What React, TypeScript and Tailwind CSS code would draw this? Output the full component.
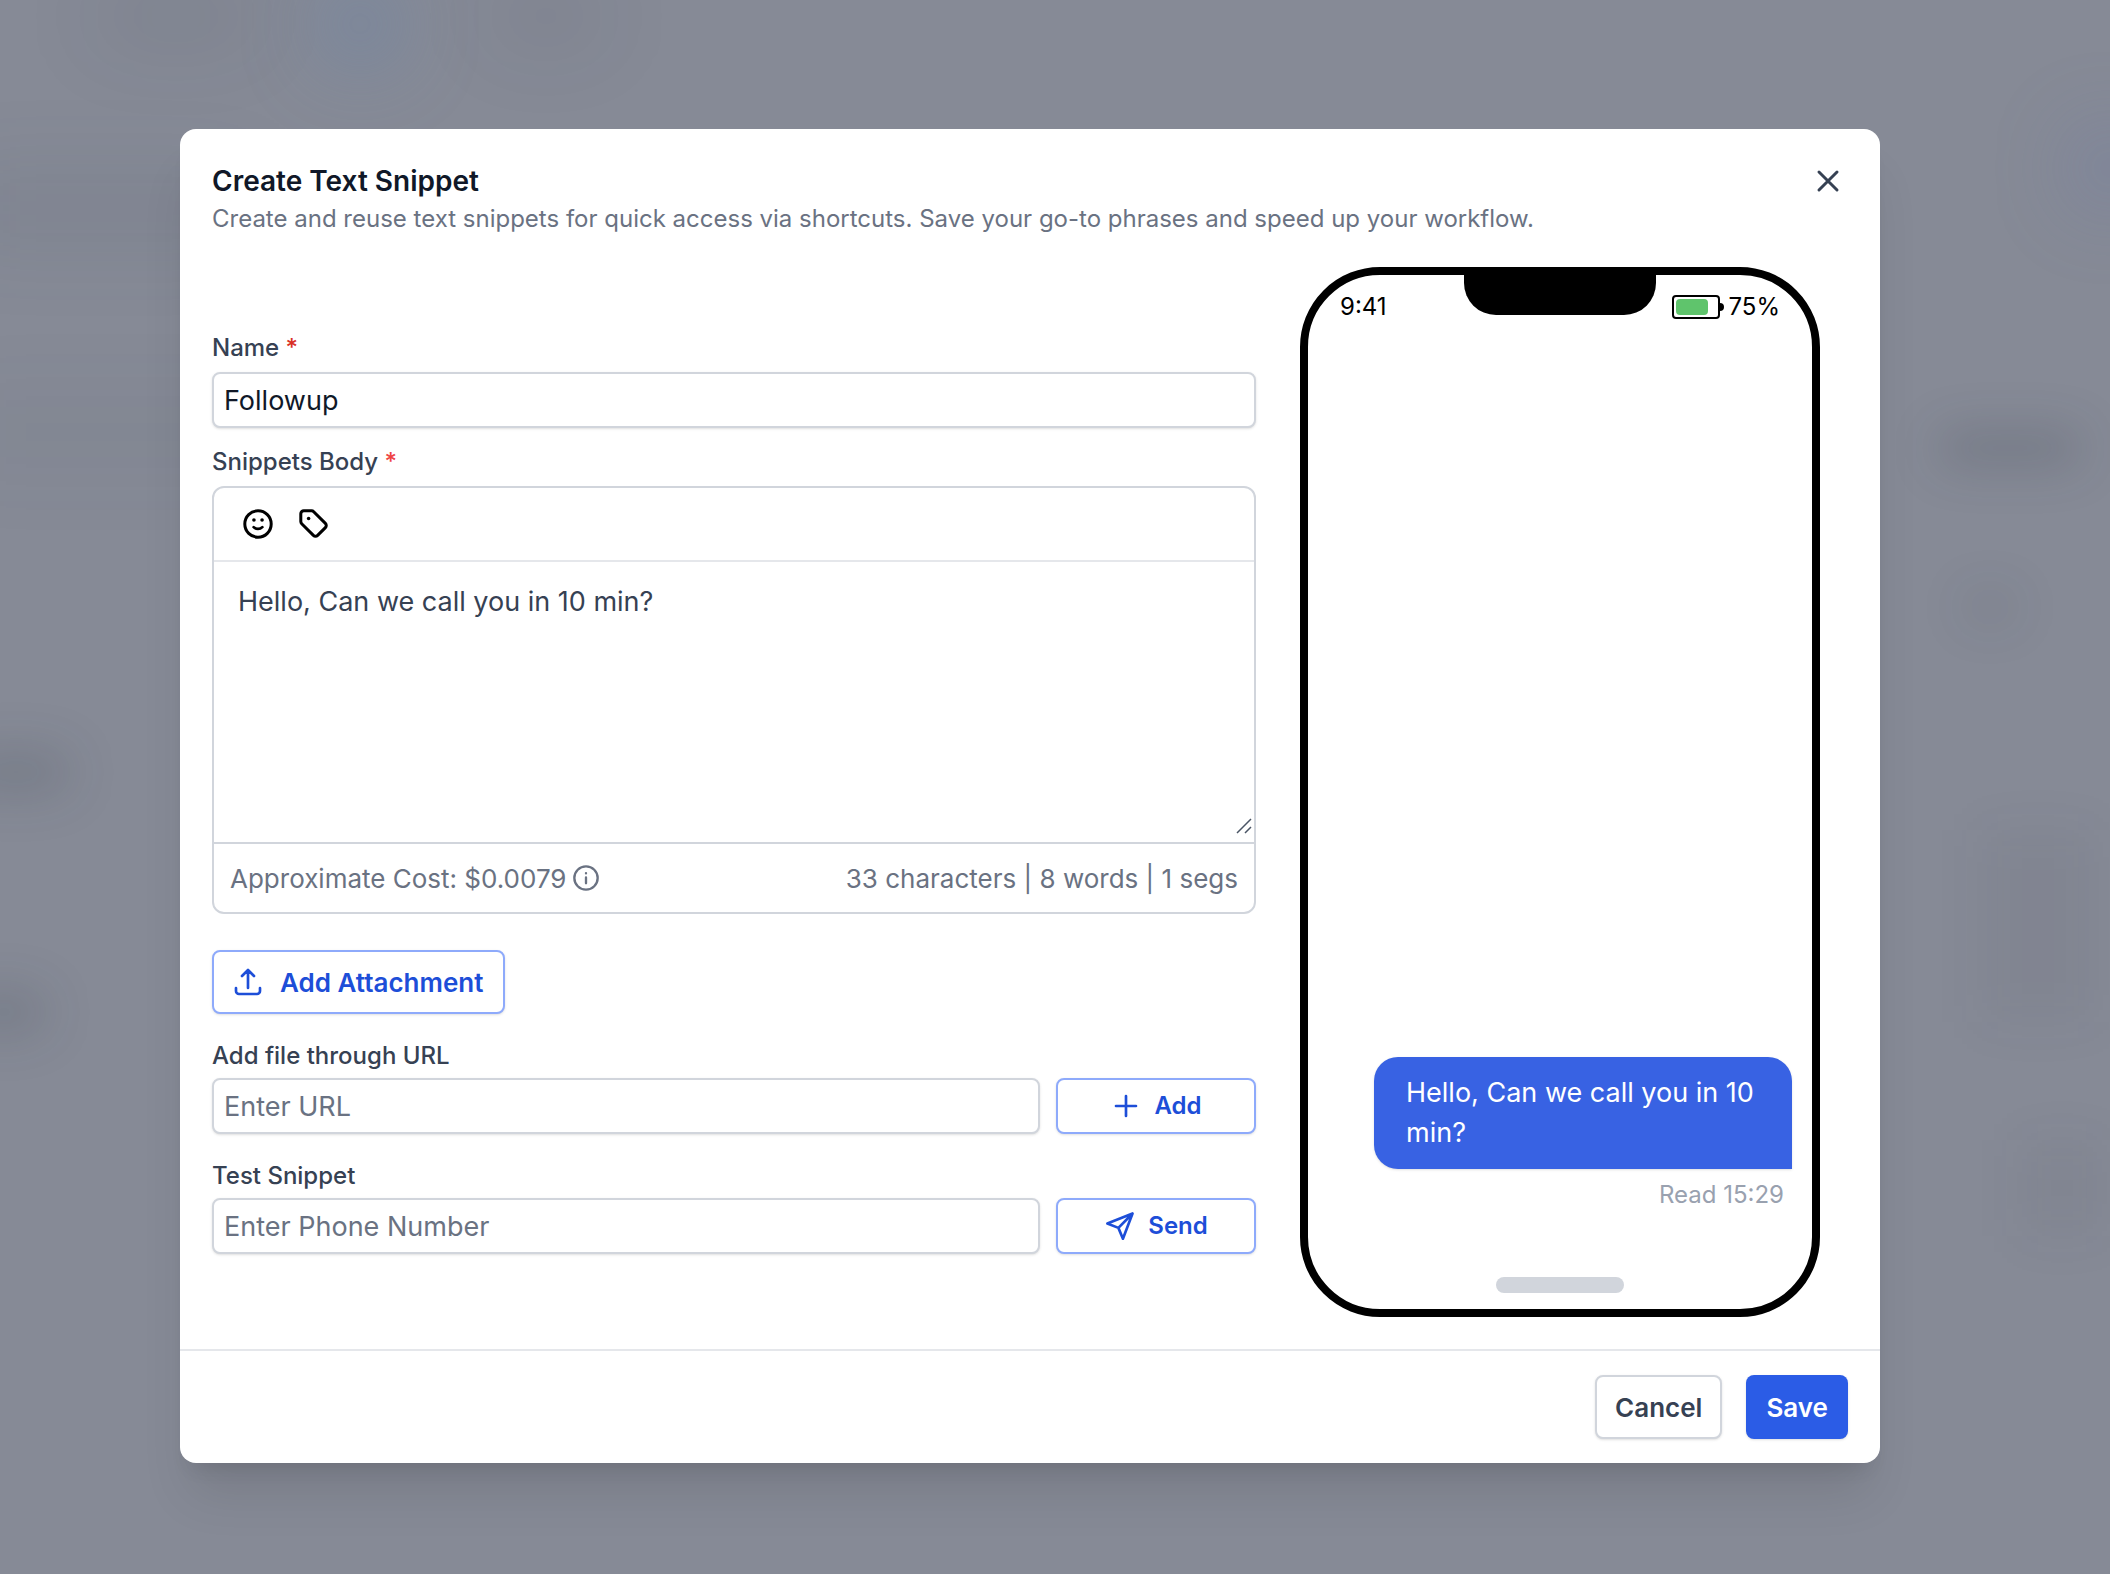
import { useState, type ReactNode } from "react";

function Icon({ className, children }: { className: string; children: ReactNode }) {
  return (
    <svg
      viewBox="0 0 24 24"
      fill="none"
      stroke="currentColor"
      strokeWidth="2"
      strokeLinecap="round"
      strokeLinejoin="round"
      aria-hidden="true"
      className={className}
    >
      {children}
    </svg>
  );
}

const fieldClass =
  "h-14 w-full min-w-0 rounded-lg border-2 border-gray-300 bg-white px-2.5 text-[27px] text-gray-900 shadow-sm outline-none placeholder:text-gray-500";
const labelClass = "text-2xl leading-9 font-medium text-gray-700";
const sideButtonClass =
  "flex h-14 w-[200px] shrink-0 items-center justify-center gap-3 rounded-lg border-2 border-[#8eaafb] bg-white text-2xl font-semibold text-[#1d4ed8] shadow-sm";

function Backdrop() {
  return (
    <div aria-hidden="true" className="absolute inset-0 overflow-hidden">
      <div className="absolute -top-2 left-24 h-12 w-40 rounded-full bg-gray-800/10 blur-2xl" />
      <div className="absolute -top-4 left-80 h-20 w-20 rounded-full bg-[#5b7fae]/40 blur-2xl" />
      <div className="absolute -top-2 left-[490px] h-12 w-28 rounded-full bg-gray-800/10 blur-2xl" />
      <div className="absolute top-44 -left-10 h-16 w-72 bg-slate-700/10 blur-2xl" />
      <div className="absolute top-[400px] -left-10 h-16 w-72 bg-slate-700/5 blur-2xl" />
      <div className="absolute top-[750px] -left-10 h-11 w-28 rounded-full bg-gray-800/15 blur-xl" />
      <div className="absolute top-[990px] -left-10 h-11 w-22 rounded-full bg-gray-800/15 blur-xl" />
      <div className="absolute top-32 -right-10 h-20 w-20 rounded-full bg-[#5b6fae]/25 blur-2xl" />
      <div className="absolute top-[432px] right-7 h-8 w-36 rounded-full bg-gray-800/20 blur-xl" />
      <div className="absolute top-[595px] right-24 h-6 w-12 rounded-full bg-gray-800/15 blur-xl" />
      <div className="absolute top-[830px] right-4 h-48 w-28 bg-gray-800/5 blur-xl" />
      <div className="absolute top-[1140px] right-2 h-24 w-20 bg-gray-800/5 blur-xl" />
    </div>
  );
}

function Phone({ message }: { message: string }) {
  return (
    <div className="relative flex h-[1050px] w-[520px] flex-col rounded-[80px] border-8 border-black bg-white">
      <div className="absolute top-0 left-1/2 h-10 w-48 -translate-x-1/2 rounded-b-[32px] bg-black" />
      <div className="flex items-center justify-between px-8 pt-4 text-2xl leading-8 text-black">
        <span>9:41</span>
        <div className="flex items-center gap-1">
          <div className="flex items-center">
            <div className="h-6 w-12 rounded-[4px] border-2 border-black p-0.5">
              <div className="h-4 w-8 rounded-[4px] bg-[#5fc46c]" />
            </div>
            <div className="h-2 w-1 rounded-r-full bg-black" />
          </div>
          <span>75%</span>
        </div>
      </div>
      <div className="flex flex-1 flex-col items-end justify-end pr-5 pb-16">
        <p className="w-[418px] rounded-3xl rounded-br-none bg-[#3862e3] px-8 py-4 text-[27px] leading-10 text-white shadow-sm">
          {message}
        </p>
        <p className="pt-2 pr-2 text-2xl leading-9 text-gray-400">Read 15:29</p>
      </div>
      <div className="mb-4 h-4 w-32 self-center rounded-full bg-gray-300" />
    </div>
  );
}

export default function App() {
  const [name, setName] = useState("Followup");
  const [body, setBody] = useState("Hello, Can we call you in 10 min?");
  const words = body.split(/\s+/).filter(Boolean).length;

  return (
    <div className="relative min-h-screen bg-[#868a96] pt-[129px] pr-[230px] pb-[111px] pl-[180px] font-['Inter',sans-serif]">
      <Backdrop />
      <div
        role="dialog"
        aria-labelledby="dialog-title"
        className="relative rounded-2xl bg-white shadow-[0_40px_50px_-10px_rgb(0_0_0/0.1),0_16px_20px_-12px_rgb(0_0_0/0.1)]"
      >
        <header className="flex items-start justify-between px-8 pt-8">
          <div>
            <h1 id="dialog-title" className="text-[28px] leading-10 font-semibold text-gray-900">
              Create Text Snippet
            </h1>
            <p className="text-2xl leading-9 text-gray-500">
              Create and reuse text snippets for quick access via shortcuts. Save your go-to phrases and speed up your
              workflow.
            </p>
          </div>
          <button type="button" aria-label="Close" className="p-0.5 text-gray-700">
            <Icon className="size-9">
              <path d="M6 18 18 6M6 6l12 12" />
            </Icon>
          </button>
        </header>

        <div className="flex gap-11 pt-[30px] pr-[60px] pb-8 pl-8">
          <form className="flex min-w-0 flex-1 flex-col pt-[63px]" onSubmit={(e) => e.preventDefault()}>
            <label htmlFor="name" className={labelClass}>
              Name <span className="text-[#d93025]">*</span>
            </label>
            <input
              id="name"
              className={`${fieldClass} mt-1.5`}
              value={name}
              onChange={(e) => setName(e.target.value)}
            />

            <label htmlFor="body" className={`${labelClass} mt-4`}>
              Snippets Body <span className="text-[#ef4444]">*</span>
            </label>
            <div className="mt-1.5 overflow-hidden rounded-xl border-2 border-gray-300">
              <div className="flex h-[74px] items-center gap-5 border-b-2 border-gray-200 px-[26px] text-black">
                <button type="button" aria-label="Insert emoji">
                  <Icon className="size-9">
                    <circle cx="12" cy="12" r="8.8" />
                    <path d="M9.1 14.1c.8.8 1.8 1.2 2.9 1.2s2.100-.4 2.900-1.200" strokeWidth="1.8" />
                    <g fill="currentColor" stroke="none">
                      <circle cx="9.3" cy="9.3" r="1.200" />
                      <circle cx="14.7" cy="9.3" r="1.200" />
                    </g>
                  </Icon>
                </button>
                <button type="button" aria-label="Insert tag">
                  <Icon className="size-9">
                    <path d="M3.200 5.200a2 2 0 0 1 2-2h5.200a2 2 0 0 1 1.400.6l7.800 7.800a2 2 0 0 1 0 2.800l-5.200 5.200a2 2 0 0 1-2.800 0l-7.800-7.800a2 2 0 0 1-.6-1.400z" />
                    <circle cx="8.400" cy="8.300" r="1.200" fill="currentColor" stroke="none" />
                  </Icon>
                </button>
              </div>
              <div className="relative">
                <textarea
                  id="body"
                  className="block h-[280px] w-full resize-none px-6 pt-5 text-[27px] leading-10 text-gray-700 outline-none"
                  value={body}
                  onChange={(e) => setBody(e.target.value)}
                />
                <svg
                  viewBox="0 0 16 16"
                  aria-hidden="true"
                  className="absolute right-0.5 bottom-2 size-4 text-gray-600"
                  stroke="currentColor"
                  strokeWidth="1.5"
                >
                  <path d="M1 15 15 1M9 15l6-6" />
                </svg>
              </div>
              <div className="flex h-[70px] items-center justify-between border-t-2 border-gray-300 px-4 text-[26px] text-gray-500">
                <span className="flex items-center gap-1.5">
                  Approximate Cost: $0.0079
                  <Icon className="size-7">
                    <circle cx="12" cy="12" r="10" />
                    <path d="M12 11.500v5M12 7.800v.2" />
                  </Icon>
                </span>
                <span>
                  {body.length} characters | {words} words | 1 segs
                </span>
              </div>
            </div>

            <button
              type="button"
              className="mt-9 flex h-16 items-center gap-4 self-start rounded-lg border-2 border-[#8eaafb] bg-white pr-5 pl-[18px] text-[26px] font-semibold text-[#1d4ed8] shadow-sm"
            >
              <Icon className="size-8">
                <path d="M3 16.500v2.250A2.250 2.250 0 0 0 5.250 21h13.500A2.250 2.250 0 0 0 21 18.750V16.500M7.500 7.500 12 3l4.500 4.500M12 3v13.500" />
              </Icon>
              Add Attachment
            </button>

            <label htmlFor="url" className={`${labelClass} mt-6`}>
              Add file through URL
            </label>
            <div className="mt-1 flex gap-4">
              <input id="url" className={fieldClass} placeholder="Enter URL" />
              <button type="button" className={sideButtonClass}>
                <Icon className="size-8">
                  <path d="M12 4.500v15m7.500-7.500h-15" />
                </Icon>
                Add
              </button>
            </div>

            <label htmlFor="phone" className={`${labelClass} mt-6`}>
              Test Snippet
            </label>
            <div className="mt-1 flex gap-4">
              <input id="phone" type="tel" className={fieldClass} placeholder="Enter Phone Number" />
              <button type="button" className={sideButtonClass}>
                <Icon className="size-8">
                  <path d="M21.400 2.600 2.500 10.100l8.300 3.300 3.400 8.100 7.200-18.900ZM10.800 13.400 21.400 2.600" />
                </Icon>
                Send
              </button>
            </div>
          </form>

          <Phone message={body} />
        </div>

        <footer className="flex justify-end gap-6 border-t-2 border-gray-200 px-8 py-6 text-[26px] font-semibold">
          <button
            type="button"
            className="h-16 rounded-lg border-2 border-gray-300 bg-white px-[18px] text-gray-700 shadow-sm"
          >
            Cancel
          </button>
          <button type="button" className="h-16 rounded-lg bg-[#2b5ce6] px-5 text-white shadow-sm">
            Save
          </button>
        </footer>
      </div>
    </div>
  );
}
